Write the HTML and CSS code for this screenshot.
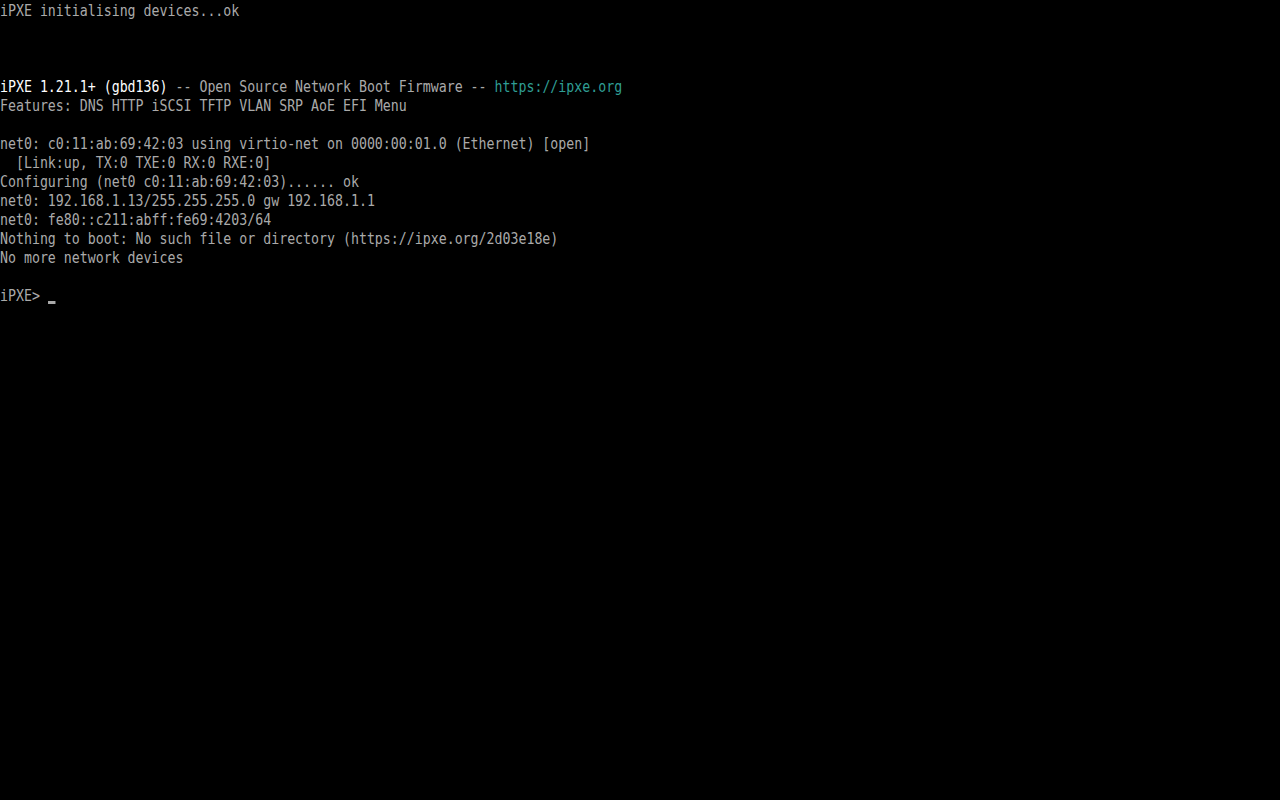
FILE: index.html
```html
<!DOCTYPE html>
<html lang="en">

<head>
    <meta charset="UTF-8">
    <meta name="viewport" content="width=device-width, initial-scale=1.0">
    <title>iPXE</title>
    <link rel="stylesheet" href="styles.css">
</head>

<body>
    <pre class="console">iPXE initialising devices...ok



<span class="bright">iPXE 1.21.1+ (gbd136)</span> -- Open Source Network Boot Firmware -- <span class="link">https://ipxe.org</span>
Features: DNS HTTP iSCSI TFTP VLAN SRP AoE EFI Menu

net0: c0:11:ab:69:42:03 using virtio-net on 0000:00:01.0 (Ethernet) [open]
  [Link:up, TX:0 TXE:0 RX:0 RXE:0]
Configuring (net0 c0:11:ab:69:42:03)...... ok
net0: 192.168.1.13/255.255.255.0 gw 192.168.1.1
net0: fe80::c211:abff:fe69:4203/64
Nothing to boot: No such file or directory (https://ipxe.org/2d03e18e)
No more network devices

iPXE&gt; <span class="cursor"></span></pre>
</body>

</html>
```

FILE: styles.css
```css
html,
body {
    margin: 0;
    background: #000000;
    min-height: 100vh;
    overflow: hidden;
}

.console {
    margin: 0;
    padding: 1px 0 0 0;
    font-family: "DejaVu Sans Mono", "Liberation Mono", monospace;
    font-size: 16px;
    line-height: 19px;
    color: #aaaaaa;
    /* squeeze the glyphs down to the 8px text-mode cell */
    transform: scaleX(0.828);
    transform-origin: left top;
    white-space: pre;
}

.bright {
    color: #ffffff;
}

.link {
    color: #2f9e94;
}

.cursor {
    display: inline-block;
    width: 1ch;
    height: 3px;
    background: #aaaaaa;
    vertical-align: -3px;
}
```
